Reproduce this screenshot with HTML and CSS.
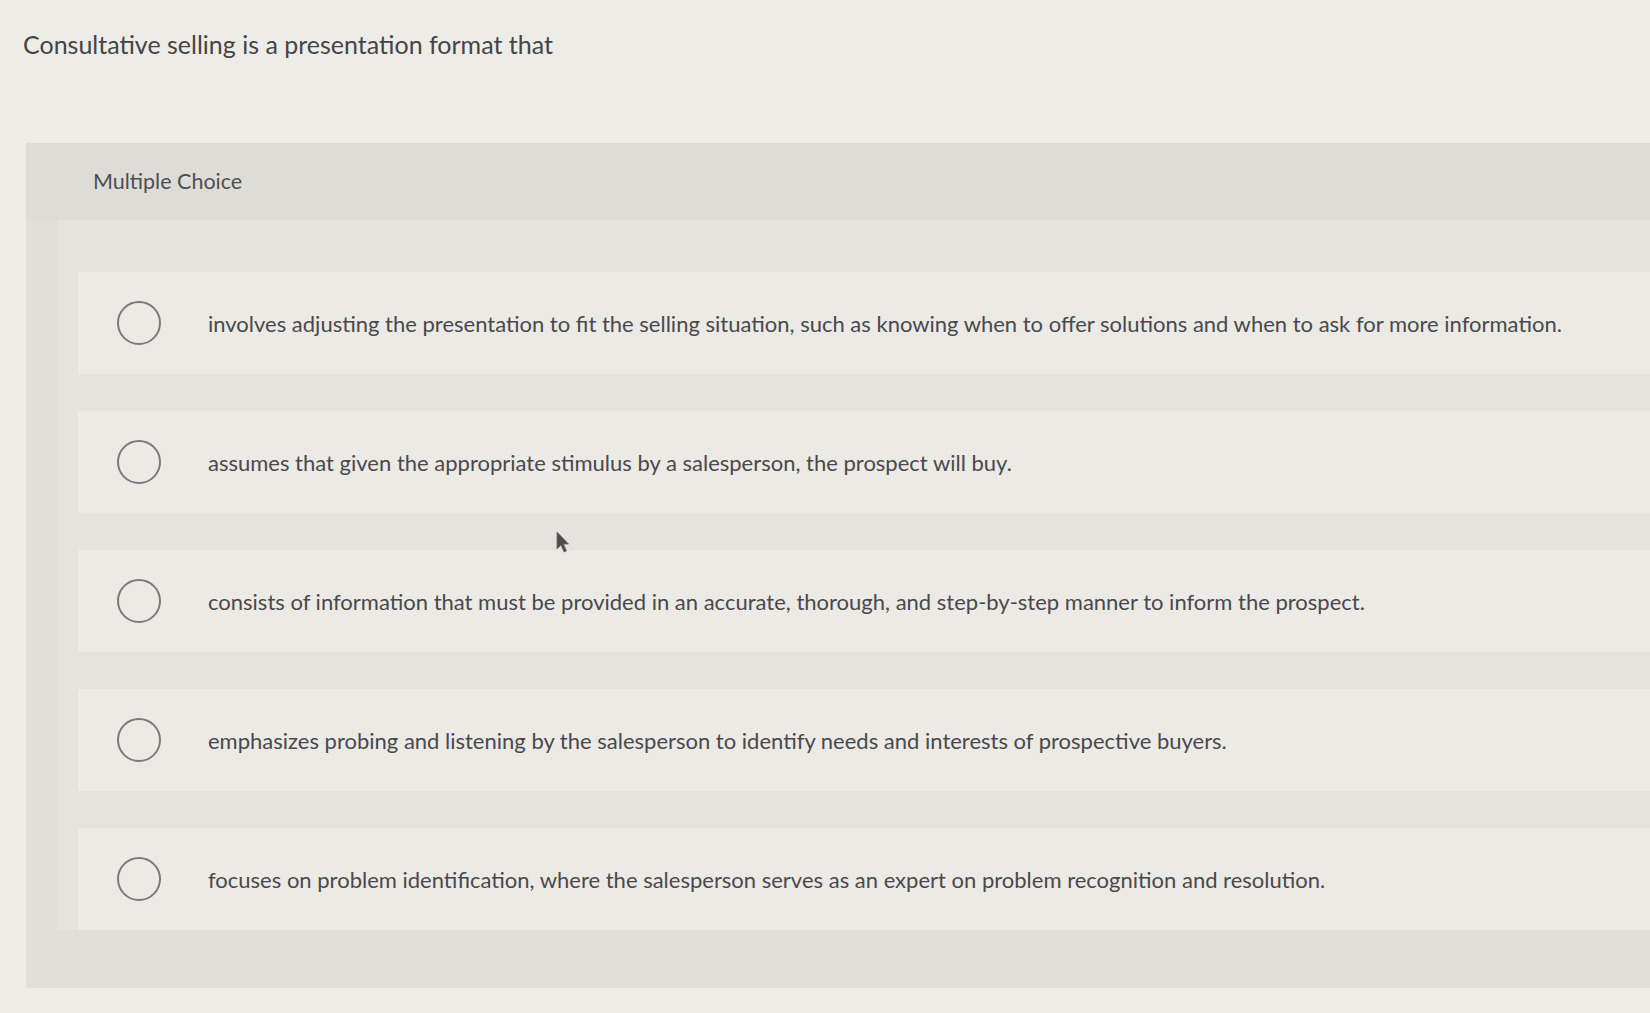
FILE: index.html
```html
<!DOCTYPE html>
<html lang="en">
<head>
  <meta charset="UTF-8" />
  <meta name="viewport" content="width=device-width, initial-scale=1.0" />
  <title>Multiple Choice</title>
  <link rel="stylesheet" href="styles.css">
</head>
<body>

  <p class="prompt">Consultative selling is a presentation format that</p>

  <div class="panel">
    <div class="panel-head">Multiple Choice</div>

    <div class="panel-body">
      <label class="choice">
        <span class="radio"></span>
        <span class="choice-text">involves adjusting the presentation to fit the selling situation, such as knowing when to offer solutions and when to ask for more information.</span>
      </label>
      <label class="choice">
        <span class="radio"></span>
        <span class="choice-text">assumes that given the appropriate stimulus by a salesperson, the prospect will buy.</span>
      </label>
      <label class="choice">
        <span class="radio"></span>
        <span class="choice-text">consists of information that must be provided in an accurate, thorough, and step-by-step manner to inform the prospect.</span>
      </label>
      <label class="choice">
        <span class="radio"></span>
        <span class="choice-text">emphasizes probing and listening by the salesperson to identify needs and interests of prospective buyers.</span>
      </label>
      <label class="choice">
        <span class="radio"></span>
        <span class="choice-text">focuses on problem identification, where the salesperson serves as an expert on problem recognition and resolution.</span>
      </label>
    </div>
  </div>

  <!-- mouse pointer -->
  <svg class="cursor" width="14" height="23" viewBox="0 0 14 23">
    <path d="M1 1 L1 18 L5 14 L8 21 L10.5 20 L7.5 13 L12.5 13 Z" fill="#4d4c50" stroke="#6a696d" stroke-width="0.8" />
  </svg>

</body>
</html>
```

FILE: styles.css
```css
body {
  font-family: Lato, "Open Sans", sans-serif;
  background: #edece7;
  margin: 0;
  padding: 0;
  color: #4f4d52;
  position: relative;
  overflow: hidden;
}

.prompt {
  margin: 0;
  padding: 29px 0 0 23px;
  height: 143px;
  box-sizing: border-box;
  font-size: 25px;
  line-height: 30px;
  color: #454448;
}

.panel {
  margin-left: 26px;
  background: #e0dfda;
  padding-bottom: 58px;
}

.panel-head {
  height: 77px;
  padding-left: 67px;
  line-height: 77px;
  font-size: 21.5px;
  color: #4f4e52;
  background: #dddcd7;
}

.panel-body {
  margin-left: 32px;
  background: #e4e3de;
  padding: 52px 0 0 20px;
  display: flex;
  flex-direction: column;
  gap: 37px;
}

.choice {
  display: flex;
  align-items: center;
  height: 102px;
  background: #ebeae5;
  cursor: pointer;
}

.radio {
  flex: none;
  width: 40px;
  height: 40px;
  margin-left: 39px;
  border: 2px solid #7b7a7e;
  border-radius: 50%;
}

.choice-text {
  margin-left: 47px;
  font-size: 22px;
  color: #4a484d;
}

.cursor {
  position: absolute;
  left: 556px;
  top: 531px;
}
```
